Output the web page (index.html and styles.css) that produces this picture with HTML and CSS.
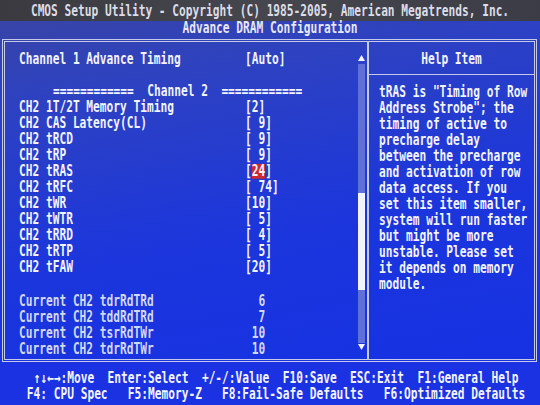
FILE: index.html
```html
<!DOCTYPE html>
<html lang="en">
<head>
    <meta charset="UTF-8">
    <meta name="viewport" content="width=device-width, initial-scale=1.0">
    <title>Advance DRAM Configuration</title>
    <link rel="stylesheet" href="styles.css">
</head>
<body>
    <div class="screen">
        <header class="title">
            <div class="title-top"><span class="tx">CMOS Setup Utility - Copyright (C) 1985-2005, American Megatrends, Inc.</span></div>
            <div class="title-sub"><span class="tx">Advance DRAM Configuration</span></div>
        </header>

        <main class="frame">
            <section class="settings">
                <div class="list">
                    <div class="row"><span class="label">Channel 1 Advance Timing</span><span class="value">[Auto]</span></div>
                    <div class="row"></div>
                    <div class="row separator">============  Channel 2  ============</div>
                    <div class="row"><span class="label">CH2 1T/2T Memory Timing</span><span class="value">[2]</span></div>
                    <div class="row"><span class="label">CH2 CAS Latency(CL)</span><span class="value">[ 9]</span></div>
                    <div class="row"><span class="label">CH2 tRCD</span><span class="value">[ 9]</span></div>
                    <div class="row"><span class="label">CH2 tRP</span><span class="value">[ 9]</span></div>
                    <div class="row"><span class="label">CH2 tRAS</span><span class="value">[<span class="sel">24</span>]</span></div>
                    <div class="row"><span class="label">CH2 tRFC</span><span class="value">[ 74]</span></div>
                    <div class="row"><span class="label">CH2 tWR</span><span class="value">[10]</span></div>
                    <div class="row"><span class="label">CH2 tWTR</span><span class="value">[ 5]</span></div>
                    <div class="row"><span class="label">CH2 tRRD</span><span class="value">[ 4]</span></div>
                    <div class="row"><span class="label">CH2 tRTP</span><span class="value">[ 5]</span></div>
                    <div class="row"><span class="label">CH2 tFAW</span><span class="value">[20]</span></div>
                    <div class="row gap"></div>
                    <div class="row info"><span class="label">Current CH2 tdrRdTRd</span><span class="value">  6</span></div>
                    <div class="row info"><span class="label">Current CH2 tddRdTRd</span><span class="value">  7</span></div>
                    <div class="row info"><span class="label">Current CH2 tsrRdTWr</span><span class="value"> 10</span></div>
                    <div class="row info"><span class="label">Current CH2 tdrRdTWr</span><span class="value"> 10</span></div>
                </div>
                <div class="scrollbar">
                    <svg class="arrow" width="7" height="6" viewBox="0 0 7 6"><path d="M3.5 0 L7 6 L0 6 Z" fill="#f4f4ff"/></svg>
                    <div class="track"><div class="thumb"></div></div>
                    <svg class="arrow" width="7" height="6" viewBox="0 0 7 6"><path d="M0 0 L7 0 L3.5 6 Z" fill="#f4f4ff"/></svg>
                </div>
            </section>

            <aside class="help">
                <div class="help-head"><span class="tx">Help Item</span></div>
                <div class="help-text">
                    <div class="help-line">tRAS is "Timing of Row</div>
                    <div class="help-line">Address Strobe"; the</div>
                    <div class="help-line">timing of active to</div>
                    <div class="help-line">precharge delay</div>
                    <div class="help-line">between the precharge</div>
                    <div class="help-line">and activation of row</div>
                    <div class="help-line">data access. If you</div>
                    <div class="help-line">set this item smaller,</div>
                    <div class="help-line">system will run faster</div>
                    <div class="help-line">but might be more</div>
                    <div class="help-line">unstable. Please set</div>
                    <div class="help-line">it depends on memory</div>
                    <div class="help-line">module.</div>
                </div>
            </aside>
        </main>

        <footer class="keys">
            <div class="key-line">↑↓←→:Move  Enter:Select  +/-/:Value  F10:Save  ESC:Exit  F1:General Help</div>
            <div class="key-line">F4: CPU Spec   F5:Memory-Z   F8:Fail-Safe Defaults   F6:Optimized Defaults</div>
        </footer>
    </div>
</body>
</html>
```

FILE: styles.css
```css
body {
    margin: 0;
    background: #1430e0;
    font-family: "DejaVu Sans Mono", "Liberation Mono", monospace;
    font-size: 11.2px;
    font-weight: bold;
    color: #f2f3ff;
}

.screen {
    width: 540px;
    height: 405px;
    overflow: hidden;
    display: flex;
    flex-direction: column;
    background: linear-gradient(170deg, #3a44a0 0%, #2e42c0 20%, #1c36dc 55%, #1430e4 100%);
}

/* stretched glyphs, like the tall BIOS bitmap font */
.tx {
    display: inline-block;
    transform: scaleY(1.35);
}

.title-top {
    height: 18px;
    padding-top: 3px;
    line-height: 18px;
    text-align: center;
    color: #dcdce6;
    background: linear-gradient(90deg, #3a3a40, #46464e 50%, #3c3c46);
}

.title-sub {
    height: 14px;
    line-height: 16px;
    text-align: center;
    color: #e6e8f4;
}

.frame {
    display: flex;
    height: 323px;
    margin: 4px 3px 0 2px;
    border: 3px double #c4cae8;
    box-sizing: border-box;
}

.settings {
    display: flex;
    width: 362px;
}

.list {
    flex: 1;
    padding: 10px 0 0 14px;
}

.row {
    display: flex;
    height: 16px;
    line-height: 16px;
    white-space: pre;
    transform: scaleY(1.35);
}

.row.gap {
    height: 18px;
}

.label {
    width: 226px;
}

.separator {
    padding-left: 34px;
}

.info {
    color: #d4d8f0;
}

.sel {
    display: inline-block;
    line-height: 11px;
    background: #cc2a2c;
}

.scrollbar {
    display: flex;
    flex-direction: column;
    align-items: center;
    width: 7px;
    margin: 13px 2px 0 0;
}

.arrow {
    display: block;
}

.track {
    width: 7px;
    height: 279px;
    margin: 3px 0 1px;
    background: #6070d8;
}

.thumb {
    height: 97px;
    margin-top: 129px;
    background: #f2f2fa;
}

.help {
    flex: 1;
    border-left: 2px solid #c4cae8;
}

.help-head {
    padding: 10px 0 6px;
    line-height: 16px;
    text-align: center;
    border-bottom: 1px solid #c4cae8;
}

.help-text {
    padding: 10px 0 0 10px;
}

.help-line {
    height: 16px;
    line-height: 16px;
    white-space: pre;
    transform: scaleY(1.35);
}

.keys {
    flex: 1;
    padding: 9px 0 0 12px;
    background: #1a32e2;
}

.key-line {
    height: 16px;
    line-height: 16px;
    white-space: pre;
    text-align: center;
    transform: scaleY(1.35);
}
```
